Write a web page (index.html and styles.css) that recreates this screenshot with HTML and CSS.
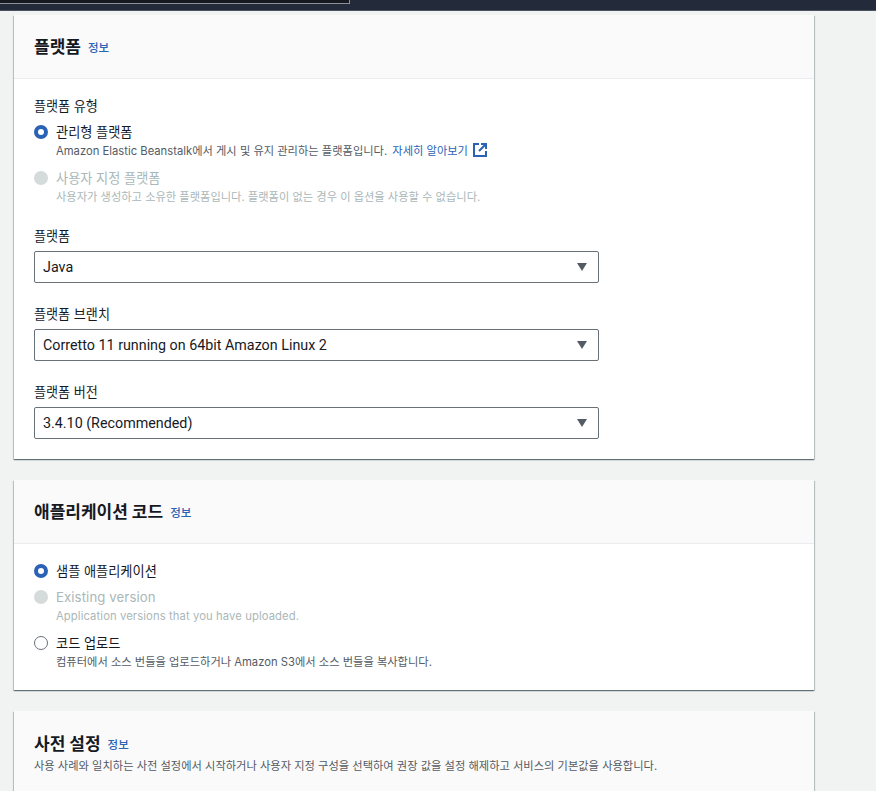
FILE: index.html
```html
<!DOCTYPE html>
<html lang="ko">
<head>
   <meta charset="UTF-8">
   <meta name="viewport" content="width=device-width, initial-scale=1.0">
   <title>플랫폼</title>
   <link rel="stylesheet" href="styles.css">
</head>
<body>
   <div class="topbar">
      <div class="searchbox"></div>
   </div>

   <div class="content">
      <section class="card">
         <div class="card-header">
            <h2>플랫폼</h2>
            <a class="info" href="#">정보</a>
         </div>
         <div class="card-body">
            <div class="label type-label">플랫폼 유형</div>
            <div class="radio">
               <span class="dot checked"></span>
               <div>
                  <div class="radio-title">관리형 플랫폼</div>
                  <div class="radio-desc">Amazon Elastic Beanstalk에서 게시 및 유지 관리하는 플랫폼입니다. <a href="#">자세히 알아보기</a>
                     <svg class="ext" width="14" height="14" viewBox="0 0 14 14" fill="none" stroke="#2a62b5" stroke-width="2">
                        <path d="M6 1H1v12h12V8"/>
                        <path d="M8 1h5v5M13 1L6 8"/>
                     </svg>
                  </div>
               </div>
            </div>
            <div class="radio disabled">
               <span class="dot off"></span>
               <div>
                  <div class="radio-title">사용자 지정 플랫폼</div>
                  <div class="radio-desc">사용자가 생성하고 소유한 플랫폼입니다. 플랫폼이 없는 경우 이 옵션을 사용할 수 없습니다.</div>
               </div>
            </div>

            <div class="field">
               <div class="label">플랫폼</div>
               <div class="select">Java<span class="caret"></span></div>
            </div>
            <div class="field">
               <div class="label">플랫폼 브랜치</div>
               <div class="select">Corretto 11 running on 64bit Amazon Linux 2<span class="caret"></span></div>
            </div>
            <div class="field">
               <div class="label">플랫폼 버전</div>
               <div class="select">3.4.10 (Recommended)<span class="caret"></span></div>
            </div>
         </div>
      </section>

      <section class="card">
         <div class="card-header">
            <h2>애플리케이션 코드</h2>
            <a class="info" href="#">정보</a>
         </div>
         <div class="card-body code-body">
            <div class="radio sample">
               <span class="dot checked"></span>
               <div>
                  <div class="radio-title">샘플 애플리케이션</div>
               </div>
            </div>
            <div class="radio disabled latin">
               <span class="dot off"></span>
               <div>
                  <div class="radio-title">Existing version</div>
                  <div class="radio-desc">Application versions that you have uploaded.</div>
               </div>
            </div>
            <div class="radio">
               <span class="dot"></span>
               <div>
                  <div class="radio-title">코드 업로드</div>
                  <div class="radio-desc">컴퓨터에서 소스 번들을 업로드하거나 Amazon S3에서 소스 번들을 복사합니다.</div>
               </div>
            </div>
         </div>
      </section>

      <section class="card">
         <div class="card-header preset-header">
            <div class="title-row">
               <h2>사전 설정</h2>
               <a class="info" href="#">정보</a>
            </div>
            <p>사용 사례와 일치하는 사전 설정에서 시작하거나 사용자 지정 구성을 선택하여 권장 값을 설정 해제하고 서비스의 기본값을 사용합니다.</p>
         </div>
      </section>
   </div>
</body>
</html>
```

FILE: styles.css
```css
html, body {
   height: 791px;
   overflow: hidden;
}
body {
   margin: 0;
   background: #f1f3f3;
   color: #16191f;
   font-family: Inter, "Noto Sans CJK KR", sans-serif;
   font-size: 13px;
}
a {
   color: #2a62b5;
   text-decoration: none;
}
.topbar {
   height: 10px;
   background: #232b3a;
   border-bottom: 1px solid #4a5161;
}
.searchbox {
   width: 349px;
   height: 3px;
   background: #16191f;
   border-right: 1px solid #8d9096;
   border-bottom: 1px solid #8d9096;
}
.content {
   width: 800px;
   margin-left: 14px;
   padding-top: 4px;
   display: flex;
   flex-direction: column;
   gap: 21px;
}
.card {
   background: #fff;
   box-shadow: 0 1px 1px 0 rgba(0, 28, 36, 0.4), 1px 1px 1px 0 rgba(0, 28, 36, 0.18), -1px 1px 1px 0 rgba(0, 28, 36, 0.18);
}
.card-header {
   height: 64px;
   box-sizing: border-box;
   padding: 0 20px;
   display: flex;
   align-items: center;
   gap: 7px;
   background: #fafafa;
   border-bottom: 1px solid #eaeded;
}
.card-header h2 {
   margin: 0;
   font-size: 17px;
   font-weight: 700;
   line-height: 22px;
}
.info {
   font-size: 11.5px;
   font-weight: 500;
   line-height: 22px;
   margin-top: 2px;
}
.card-body {
   padding: 17px 20px 20px;
}
.code-body {
   padding-bottom: 11px;
}
.label {
   font-size: 13.1px;
   line-height: 20px;
}
.type-label {
   margin-bottom: 6px;
}
.radio {
   display: flex;
   gap: 8px;
   margin-bottom: 8px;
}
.sample {
   margin-bottom: 6px;
}
.latin {
   letter-spacing: 0.1px;
}
.dot {
   width: 14px;
   height: 14px;
   box-sizing: border-box;
   margin-top: 3px;
   flex: none;
   border-radius: 50%;
   border: 1px solid #687078;
   background: #fff;
}
.dot.checked {
   border: 4px solid #2a62b5;
}
.dot.off {
   border: none;
   background: #d5dbdb;
}
.radio-title {
   font-size: 13.2px;
   line-height: 20px;
}
.radio-desc {
   font-size: 11.25px;
   line-height: 18px;
   color: #545b64;
}
.radio-desc a {
   margin-left: 2px;
}
.disabled .radio-title,
.disabled .radio-desc {
   color: #aab7b8;
}
.ext {
   vertical-align: -2px;
   margin-left: 2px;
}
.field {
   margin-top: 21px;
}
.radio + .field {
   margin-top: 20px;
}
.select {
   position: relative;
   height: 32px;
   box-sizing: border-box;
   width: 565px;
   margin-top: 5px;
   padding-left: 8px;
   border: 1px solid #687078;
   border-radius: 2px;
   font-family: Roboto, sans-serif;
   font-size: 14.3px;
   line-height: 31px;
}
.caret {
   position: absolute;
   right: 11px;
   top: 11px;
   width: 0;
   height: 0;
   border-left: 5.5px solid transparent;
   border-right: 5.5px solid transparent;
   border-top: 8px solid #545b64;
}
.preset-header {
   height: 100px;
   display: block;
   padding-top: 21px;
   border-bottom: none;
}
.title-row {
   display: flex;
   align-items: center;
   gap: 7px;
}
.preset-header p {
   margin: 1px 0 0;
   font-size: 11.25px;
   line-height: 18px;
   color: #545b64;
}
```
